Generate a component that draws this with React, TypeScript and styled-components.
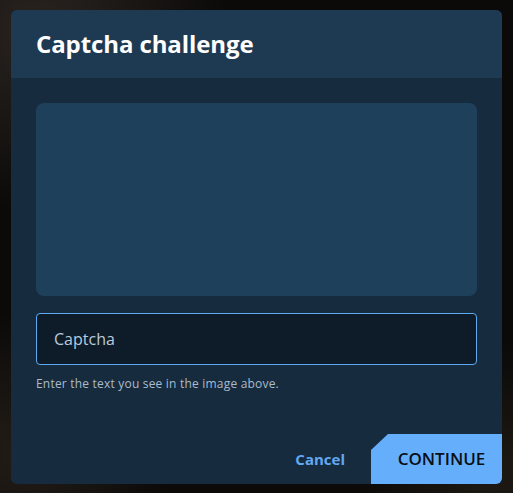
import styled, { createGlobalStyle } from "styled-components";

const GlobalStyle = createGlobalStyle`
  html, body {
    margin: 0;
    padding: 0;
    height: 100%;
  }
  body {
    font-family: "Open Sans", "DejaVu Sans", sans-serif;
    background: #0a0908;
  }
`;

// dim backdrop behind the dialog
const Backdrop = styled.div`
  width: 513px;
  height: 493px;
  box-sizing: border-box;
  padding: 10px 11px 9px 11px;
  background:
    radial-gradient(ellipse at 8% 6%, #2a2420 0%, transparent 28%),
    radial-gradient(ellipse at 4% 92%, #221c17 0%, transparent 22%),
    radial-gradient(ellipse at 96% 96%, #1e1913 0%, transparent 20%),
    #0b0a09;
`;

const Dialog = styled.div`
  display: flex;
  flex-direction: column;
  height: 100%;
  background: #172b3f;
  border-radius: 6px;
  overflow: hidden;
`;

const Header = styled.div`
  height: 68px;
  box-sizing: border-box;
  display: flex;
  align-items: center;
  padding: 0 25px 2px;
  background: #1e3a52;
`;

const Title = styled.h2`
  margin: 0;
  font-family: "Open Sans", sans-serif;
  font-weight: 700;
  font-size: 24px;
  letter-spacing: -0.1px;
  color: #ffffff;
`;

const Body = styled.div`
  flex: 1;
  display: flex;
  flex-direction: column;
  padding: 25px 25px 0;
`;

const ImageBox = styled.div`
  height: 193px;
  border-radius: 8px;
  background: #1f405b;
`;

const Input = styled.input`
  margin-top: 17px;
  height: 52px;
  box-sizing: border-box;
  padding: 0 17px;
  border: 1px solid #5da9f2;
  border-radius: 4px;
  background: #0e1c29;
  color: #c9d8e6;
  font-family: "Open Sans", sans-serif;
  font-size: 16px;
  outline: none;
  &::placeholder {
    color: #b9cadb;
  }
`;

const Hint = styled.p`
  margin: 10px 0 0;
  font-family: "Open Sans", sans-serif;
  font-size: 12px;
  letter-spacing: 0.2px;
  color: #a9bccd;
`;

const Footer = styled.div`
  margin-top: auto;
  display: flex;
  justify-content: flex-end;
  align-items: center;
  gap: 26px;
`;

const CancelButton = styled.button`
  border: none;
  background: none;
  padding: 0 0 0 3px;
  font-family: "Open Sans", sans-serif;
  font-weight: 700;
  font-size: 15px;
  color: #62a9f2;
  cursor: pointer;
`;

const ContinueButton = styled.button`
  width: 131px;
  height: 50px;
  border: none;
  padding: 0 0 2px 10px;
  background: #64aefb;
  clip-path: polygon(17px 0, 100% 0, 100% 100%, 0 100%, 0 16px);
  font-family: "Open Sans", sans-serif;
  font-weight: 600;
  font-size: 17px;
  color: #0a0f16;
  text-transform: uppercase;
  cursor: pointer;
`;

export default function App() {
  return (
    <>
      <GlobalStyle />
      <Backdrop>
        <Dialog>
          <Header>
            <Title>Captcha challenge</Title>
          </Header>
          <Body>
            <ImageBox />
            <Input placeholder="Captcha" />
            <Hint>Enter the text you see in the image above.</Hint>
          </Body>
          <Footer>
            <CancelButton>Cancel</CancelButton>
            <ContinueButton>Continue</ContinueButton>
          </Footer>
        </Dialog>
      </Backdrop>
    </>
  );
}
